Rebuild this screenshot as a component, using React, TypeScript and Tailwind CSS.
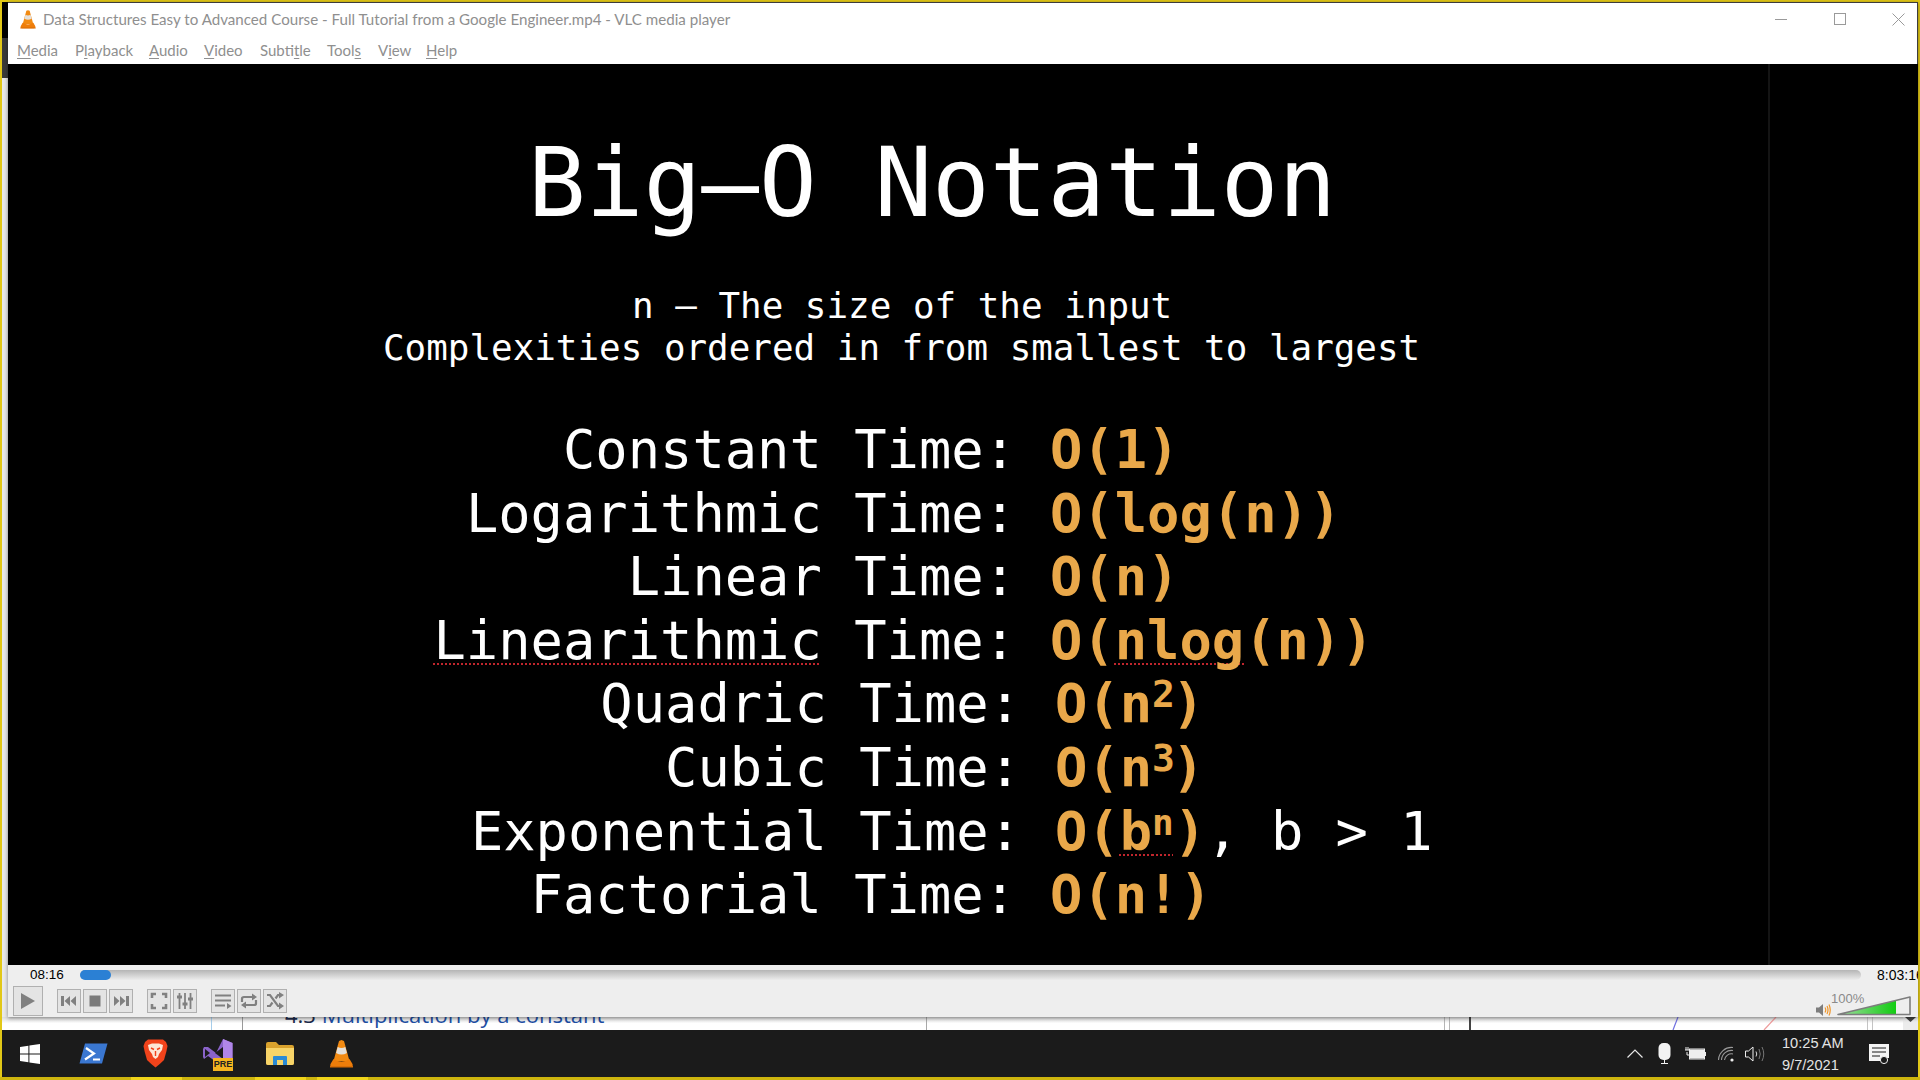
import React from "react";

function Cone({ w, h }: { w: number; h: number }) {
  return (
    <svg width={w} height={h} viewBox="0 0 24 28">
      <path d="M12 0 L14.5 1 L20 21 L4 21 L9.5 1 Z" fill="#f28a12" />
      <path d="M8.2 7 Q12 9 15.8 7 L17.4 13 Q12 16 6.6 13 Z" fill="#e4e0da" />
      <path d="M4 19 L1 24 Q0 27 3 27 L21 27 Q24 27 23 24 L20 19 Q12 24 4 19Z" fill="#ee7d0a" />
      <path d="M0.5 26 L23.5 26 L23.5 27.5 L0.5 27.5Z" fill="#d96d05" />
    </svg>
  );
}

function CtlIcon({ kind }: { kind: string }) {
  const c = "#808080";
  const s = { width: 18, height: 18, viewBox: "0 0 18 18", fill: "none" };
  if (kind === "prev")
    return (
      <svg {...s}>
        <rect x="1" y="4" width="3" height="10" fill={c} />
        <path d="M10 4 V14 L4.5 9Z M16 4 V14 L10.5 9Z" fill={c} />
      </svg>
    );
  if (kind === "stop")
    return (
      <svg {...s}>
        <rect x="3.5" y="3.5" width="11" height="11" fill="#7a7a7a" />
      </svg>
    );
  if (kind === "next")
    return (
      <svg {...s}>
        <rect x="14" y="4" width="3" height="10" fill={c} />
        <path d="M2 4 V14 L7.5 9Z M8 4 V14 L13.5 9Z" fill={c} />
      </svg>
    );
  if (kind === "full")
    return (
      <svg {...s} stroke={c} strokeWidth="2.6">
        <path d="M2 6 V2 H6 M12 2 H16 V6 M16 12 V16 H12 M6 16 H2 V12" />
      </svg>
    );
  if (kind === "eq")
    return (
      <svg {...s} stroke={c} strokeWidth="1.8">
        <path d="M3.5 1 V17 M9 1 V17 M14.5 1 V17" />
        <path d="M1 5 H6 M6.5 12 H11.5 M12 7 H17" strokeWidth="3" />
      </svg>
    );
  if (kind === "list")
    return (
      <svg {...s} stroke={c} strokeWidth="2">
        <path d="M1 3.5 H17 M1 8.5 H17 M1 13.5 H11" />
        <path d="M13 11 L17.5 14 L13 17Z" fill={c} stroke="none" />
      </svg>
    );
  if (kind === "loop")
    return (
      <svg {...s} stroke={c} strokeWidth="2.2">
        <path d="M2 10 V6.5 Q2 5 4 5 H13" />
        <path d="M16 8 V11.5 Q16 13 14 13 H5" />
        <path d="M12 1.5 L17 5 L12 8.5Z M6 9.5 L1 13 L6 16.5Z" fill={c} stroke="none" />
      </svg>
    );
  return (
    <svg {...s} stroke={c} strokeWidth="2.2">
      <path d="M1 3 H4 L12 14 H15 M1 14 H4 L6.5 10.5 M9.5 6.5 L12 3 H15" />
      <path d="M13 0 L18 3 L13 6.5Z M13 10.5 L18 14 L13 17.5Z" fill={c} stroke="none" />
    </svg>
  );
}

function Btn({ kind, cls }: { kind: string; cls: string }) {
  return (
    <div className={`flex h-6 w-6 items-center justify-center border border-[#b0b0b0] bg-[#e4e4e4] ${cls}`}>
      <CtlIcon kind={kind} />
    </div>
  );
}

const menu = [
  { pre: "", u: "M", post: "edia", w: "w-[58px]" },
  { pre: "P", u: "l", post: "ayback", w: "w-[74px]" },
  { pre: "", u: "A", post: "udio", w: "w-[55px]" },
  { pre: "", u: "V", post: "ideo", w: "w-[56px]" },
  { pre: "Subti", u: "t", post: "le", w: "w-[67px]" },
  { pre: "Tool", u: "s", post: "", w: "w-[51px]" },
  { pre: "V", u: "i", post: "ew", w: "w-[48px]" },
  { pre: "", u: "H", post: "elp", w: "w-[40px]" },
];

const squiggle =
  "underline decoration-dotted decoration-[#c0262d] decoration-2 underline-offset-[5px] [text-decoration-skip-ink:none]";
const sup = "text-[38px] leading-[0] align-[15px] tracking-[-3px]";

const rows = [
  { label: <>Constant Time:</>, value: <>O(1)</>, w: "w-[1008px]" },
  { label: <>Logarithmic Time:</>, value: <>O(log(n))</>, w: "w-[1008px]" },
  { label: <>Linear Time:</>, value: <>O(n)</>, w: "w-[1008px]" },
  {
    label: (
      <>
        <span className={squiggle}>Linearithmic</span> Time:
      </>
    ),
    value: (
      <>
        O(<span className={squiggle}>nlog</span>(n))
      </>
    ),
    w: "w-[1008px]",
  },
  {
    label: <>Quadric Time:</>,
    value: (
      <>
        O(n<span className={sup}>2</span>)
      </>
    ),
    w: "w-[1013px]",
  },
  {
    label: <>Cubic Time:</>,
    value: (
      <>
        O(n<span className={sup}>3</span>)
      </>
    ),
    w: "w-[1013px]",
  },
  {
    label: <>Exponential Time:</>,
    value: (
      <>
        O(
        <span className={squiggle}>
          b<span className="align-[15px] text-[36px] leading-[0]">n</span>
        </span>
        )<span className="font-normal text-white">, b &gt; 1</span>
      </>
    ),
    w: "w-[1013px]",
  },
  { label: <>Factorial Time:</>, value: <>O(n!)</>, w: "w-[1008px]" },
];

export default function App() {
  return (
    <div className="flex h-[1080px] w-[1920px] flex-col overflow-hidden bg-[#e2c817] font-['Liberation_Sans',sans-serif]">
      <div className="h-[2px] shrink-0" />
      <div className="flex min-h-0 flex-1 pl-[2px] pr-[2px]">
        <div className="flex w-[1916px] flex-col">
          {/* window row */}
          <div className="flex h-[1015px] shrink-0">
            <div className="flex w-[6px] flex-col">
              <div className="h-[36px] bg-black" />
              <div className="h-[40px] bg-[#3a3a3a]" />
              <div className="flex-1 bg-[#e9e9e9]" />
            </div>
            <div className="relative z-10 flex w-[1910px] flex-col shadow-[0_1px_4px_rgba(0,0,0,0.45)]">
              {/* title bar */}
              <div className="flex h-[62px] shrink-0 flex-col border-t border-r border-[#3c3c3c] bg-white font-['Lato',sans-serif]">
                <div className="flex h-[33px] items-center pl-[12px]">
                  <Cone w={16} h={19} />
                  <span className="ml-[7px] whitespace-nowrap text-[15.13px] text-[#8f8f8f]">
                    Data Structures Easy to Advanced Course - Full Tutorial from a Google Engineer.mp4 - VLC media player
                  </span>
                  <div className="ml-auto flex items-center pr-[12px]">
                    <svg width="13" height="13" viewBox="0 0 13 13" className="mr-[46px]">
                      <path d="M0 6.5H12" stroke="#9a9a9a" strokeWidth="1" />
                    </svg>
                    <svg width="13" height="13" viewBox="0 0 13 13" className="mr-[45px]">
                      <rect x="0.5" y="0.5" width="11" height="11" fill="none" stroke="#9a9a9a" strokeWidth="1" />
                    </svg>
                    <svg width="13" height="13" viewBox="0 0 13 13">
                      <path d="M0.5 0.5L12.5 12.5M12.5 0.5L0.5 12.5" stroke="#9a9a9a" strokeWidth="1" />
                    </svg>
                  </div>
                </div>
                <div className="flex h-[28px] items-center pl-[9px] pt-[1px] text-[15px] text-[#8f8f8f]">
                  {menu.map((m, i) => (
                    <span key={i} className={`whitespace-nowrap ${m.w}`}>
                      {m.pre}
                      <span className="underline underline-offset-2">{m.u}</span>
                      {m.post}
                    </span>
                  ))}
                </div>
              </div>
              {/* video */}
              <div className="relative h-[901px] shrink-0 overflow-hidden bg-black pt-[64px] font-['DejaVu_Sans_Mono',monospace] text-white">
                <div className="absolute bottom-0 left-[1760px] top-0 w-[2px] bg-[#141414]" />
                <div className="ml-[520px] whitespace-nowrap text-[95.9px] leading-[110px]">Big–O Notation</div>
                <div className="mt-[47px] whitespace-nowrap text-[35.9px] leading-[42px]">
                  <div className="ml-[624px]">n – The size of the input</div>
                  <div className="ml-[375px]">Complexities ordered in from smallest to largest</div>
                </div>
                <div className="mt-[49px] text-[53.76px] leading-[63.6px]">
                  {rows.map((r, i) => (
                    <div key={i} className="flex h-[63.6px] whitespace-nowrap">
                      <div className={`${r.w} text-right`}>{r.label}</div>
                      <div className="ml-[34px] font-bold text-[#e9a84a]">{r.value}</div>
                    </div>
                  ))}
                </div>
              </div>
              {/* controls */}
              <div className="flex h-[52px] shrink-0 flex-col overflow-hidden bg-[#eeeeee]">
                <div className="flex h-[19px] shrink-0 items-center">
                  <span className="ml-[22px] w-[50px] shrink-0 text-[13.5px] leading-none text-black">08:16</span>
                  <div className="h-[10px] w-[1781px] shrink-0 rounded-[5px] bg-gradient-to-b from-[#b5b5b5] to-[#ececec]">
                    <div className="h-[10px] w-[31px] rounded-[5px] bg-[#2b80d4]" />
                  </div>
                  <span className="ml-[16px] shrink-0 whitespace-nowrap text-[14px] leading-none text-black">8:03:16</span>
                </div>
                <div className="flex h-[33px] items-start pt-[2px]">
                  <div className="ml-[5px] flex h-[30px] w-[30px] items-center justify-center border border-[#b0b0b0] bg-[#e4e4e4]">
                    <svg width="16" height="18" viewBox="0 0 16 18">
                      <path d="M1 1 L15 9 L1 17Z" fill="#808080" />
                    </svg>
                  </div>
                  <Btn kind="prev" cls="ml-[14px] mt-[3px]" />
                  <Btn kind="stop" cls="ml-[2px] mt-[3px]" />
                  <Btn kind="next" cls="ml-[2px] mt-[3px]" />
                  <Btn kind="full" cls="ml-[14px] mt-[3px]" />
                  <Btn kind="eq" cls="ml-[2px] mt-[3px]" />
                  <Btn kind="list" cls="ml-[14px] mt-[3px]" />
                  <Btn kind="loop" cls="ml-[2px] mt-[3px]" />
                  <Btn kind="shuffle" cls="ml-[2px] mt-[3px]" />
                  <div className="ml-auto flex h-[30px] items-end pr-[7px]">
                    <svg width="15" height="14" viewBox="0 0 15 14" className="mb-[-1px]">
                      <path d="M0 4.5H3L7 1V13L3 9.5H0Z" fill="#7d7d7d" />
                      <path d="M9 4.5Q10.5 7 9 9.5M11 3Q13 7 11 11M13 1.5Q15.5 7 13 12.5" fill="none" stroke="#f0962a" strokeWidth="1.2" />
                    </svg>
                    <div className="relative ml-[6px] h-[20px] w-[74px]">
                      <svg width="74" height="20" viewBox="0 0 74 20">
                        <defs>
                          <linearGradient id="vol" x1="0" x2="1" y1="0" y2="0">
                            <stop offset="0" stopColor="#a4dca4" />
                            <stop offset="1" stopColor="#12cc12" />
                          </linearGradient>
                        </defs>
                        <path d="M1 18.5 L59 4.6 V18.5Z" fill="url(#vol)" />
                        <path d="M1 18.5 L73 1 V18.5Z" fill="none" stroke="#7d7d7d" strokeWidth="1.6" strokeLinejoin="round" />
                      </svg>
                      <span className="absolute -left-[6px] -top-[4px] text-[13px] leading-none text-[#8a8a8a]">100%</span>
                    </div>
                  </div>
                </div>
              </div>
            </div>
          </div>
          {/* what shows behind the window */}
          <div className="relative flex h-[13px] shrink-0 overflow-hidden bg-gradient-to-b from-[#dcdcdc] via-white to-white">
            <div className="h-full w-[210px] border-r border-[#a6cdea]" />
            <div className="h-full w-[31px] border-r border-[#9a9a9a]" />
            <div className="h-full w-[684px] border-r border-[#a8a8a8]">
              <div className="-mt-[15px] ml-[42px] whitespace-nowrap font-['Open_Sans',sans-serif] text-[22px] font-medium leading-[24px] text-[#1d4ea3]">
                <span className="text-[#1c2a4a]">4.3</span> Multiplication by a constant
              </div>
            </div>
            <div className="h-full w-[518px] border-r border-[#b5b5b5]" />
            <div className="h-full w-[5px] border-r border-[#b5b5b5]" />
            <div className="h-full w-[21px] border-r-2 border-[#444444]" />
            <div className="h-full w-[208px]">
              <svg width="208" height="13" viewBox="0 0 208 13">
                <path d="M202 13 L207 0" stroke="#6f6fe0" strokeWidth="1.2" />
              </svg>
            </div>
            <div className="h-full w-[100px]">
              <svg width="100" height="13" viewBox="0 0 100 13">
                <path d="M85 13 L97 0" stroke="#ee9a9a" strokeWidth="1.2" />
              </svg>
            </div>
            <div className="h-full w-[89px] border-r border-[#c4c4c4]" />
            <div className="h-full w-[5px] border-r border-[#c4c4c4]" />
            <div className="h-full w-[30px]" />
            <div className="relative h-full flex-1 bg-[#ececec]">
              <svg width="16" height="6" viewBox="0 0 16 6" className="absolute left-[1px] top-0">
                <path d="M1 0H12L6.5 5Z" fill="#444" />
              </svg>
            </div>
          </div>
          {/* taskbar */}
          <div className="flex h-[47px] shrink-0 items-center bg-[#1b1b1b]">
            <svg width="20" height="20" viewBox="0 0 20 20" className="ml-[18px]">
              <path d="M0 2.9 L8.4 1.7 V9.5 H0Z M9.4 1.5 L20 0 V9.5 H9.4Z M0 10.5 H8.4 V18.3 L0 17.1Z M9.4 10.5 H20 V20 L9.4 18.5Z" fill="#fff" />
            </svg>
            <svg width="29" height="21" viewBox="0 0 29 21" className="ml-[39px]">
              <path d="M6 0.5 H28.5 L23 20.5 H0.5Z" fill="#3a77d1" />
              <path d="M7 5 L15 10.5 L6 16.5" fill="none" stroke="#fff" strokeWidth="2.2" />
              <path d="M14 16.5 H21" stroke="#fff" strokeWidth="2" />
            </svg>
            <svg width="25" height="29" viewBox="0 0 25 29" className="ml-[35px]">
              <path d="M5 0.5 H20 L23 3 L24.5 7 L23.5 12 L21 21 Q16 26 12.5 28.5 Q9 26 4 21 L1.5 12 L0.5 7 L2 3Z" fill="#f1431b" />
              <path d="M5 6 L9 4.5 H16 L20 6 L19 11 L16 15 L15 18 L12.5 20 L10 18 L9 15 L6 11Z" fill="#fde7d6" />
              <path d="M8 9 L11 10.5 M17 9 L14 10.5 M12.5 12 V17" stroke="#f1431b" strokeWidth="1.4" fill="none" />
            </svg>
            <div className="relative ml-[35px] h-[30px] w-[30px]">
              <svg width="30" height="30" viewBox="0 0 30 30">
                <path d="M20 0 L29.5 4 V24 L20 28 L5 17 L1 20 L0 18 V10 L1 8 L5 8 L13 14 Z" fill="#8a63c9" />
                <path d="M20 0 L29.5 4 V24 L20 28Z" fill="#b086e8" />
                <path d="M20 8 L12 14 L20 20Z" fill="#1b1b1b" />
                <path d="M2 10 L7 14 L2 18Z" fill="#1b1b1b" />
              </svg>
              <span className="absolute bottom-[-2px] right-0 flex h-[13px] w-[20px] items-center justify-center bg-[#f4b41f] text-[9px] font-bold leading-none text-[#222]">
                PRE
              </span>
            </div>
            <svg width="28" height="23" viewBox="0 0 28 23" className="ml-[33px]">
              <path d="M0 2 Q0 0 2 0 H10 L13 3 H26 Q28 3 28 5 V21 Q28 23 26 23 H2 Q0 23 0 21Z" fill="#d9a22d" />
              <path d="M0 6 H28 V21 Q28 23 26 23 H2 Q0 23 0 21Z" fill="#f7d468" />
              <path d="M7 23 V15 Q7 14 8 14 H20 Q21 14 21 15 V23 H17 V18 H11 V23Z" fill="#2a8ad4" />
            </svg>
            <div className="ml-[35px] flex">
              <Cone w={25} h={28} />
            </div>
            <div className="ml-auto flex items-center pr-[29px]">
              <svg width="16" height="9" viewBox="0 0 16 9" className="mr-[15px]">
                <path d="M0.5 8.5 L8 1 L15.5 8.5" fill="none" stroke="#e8e8e8" strokeWidth="1.2" />
              </svg>
              <svg width="13" height="21" viewBox="0 0 13 21" className="mr-[14px]">
                <rect x="0.5" y="0" width="12" height="17" rx="5" fill="#f2f2f2" />
                <path d="M6.5 17 V20 M3 20.5 H10" stroke="#f2f2f2" strokeWidth="1" />
              </svg>
              <svg width="21" height="13" viewBox="0 0 21 13" className="mr-[12px]">
                <rect x="5" y="2.5" width="14" height="9" fill="#eee" />
                <rect x="4.5" y="2" width="15" height="10" fill="none" stroke="#eee" strokeWidth="1" />
                <rect x="20" y="5" width="1" height="4" fill="#eee" />
                <path d="M0 3 H4 M1 0 V3 M3 0 V3 M2 5 V8 H5" stroke="#eee" strokeWidth="1" fill="none" />
              </svg>
              <svg width="18" height="16" viewBox="0 0 18 16" className="mr-[9px]">
                <path d="M0.5 14 A13 13 0 0 1 15 1.5 M3.5 14 A10 10 0 0 1 15 4.5 M6.5 14 A7 7 0 0 1 15 8" fill="none" stroke="#9a9a9a" strokeWidth="1.1" />
                <circle cx="14" cy="14" r="1.6" fill="#eee" />
              </svg>
              <svg width="20" height="16" viewBox="0 0 20 16" className="mr-[17px]">
                <path d="M0.5 5 H3.5 L8 1 V15 L3.5 11 H0.5Z" fill="none" stroke="#eee" strokeWidth="1" />
                <path d="M11 5.5 Q12.5 8 11 10.5" fill="none" stroke="#ddd" strokeWidth="1" />
                <path d="M14 3 Q16.5 8 14 13 M17 1 Q20.5 8 17 15" fill="none" stroke="#777" strokeWidth="1" />
              </svg>
              <div className="mr-[26px] flex w-[61px] flex-col gap-[7px] pt-[2px] text-[14.6px] leading-[15px] text-[#e4e4e4]">
                <span className="whitespace-nowrap">10:25 AM</span>
                <span className="whitespace-nowrap">9/7/2021</span>
              </div>
              <svg width="20" height="20" viewBox="0 0 20 20">
                <path d="M0 0 H20 V14 H14 V17 H0Z" fill="#f5f5f5" />
                <path d="M3 4 H17 M3 8 H17 M3 12 H11" stroke="#1b1b1b" strokeWidth="1" />
                <circle cx="15" cy="16" r="3.6" fill="#1b1b1b" stroke="#f0f0f0" strokeWidth="1" />
              </svg>
            </div>
          </div>
        </div>
      </div>
      <div className="flex h-[3px] shrink-0 bg-[#ceb50e]">
        <div className="ml-[131px] h-full w-[51px] bg-[#f0d41a]" />
        <div className="ml-[73px] h-full w-[51px] bg-[#f0d41a]" />
        <div className="ml-[11px] h-full w-[51px] bg-[#f0d41a]" />
      </div>
    </div>
  );
}
